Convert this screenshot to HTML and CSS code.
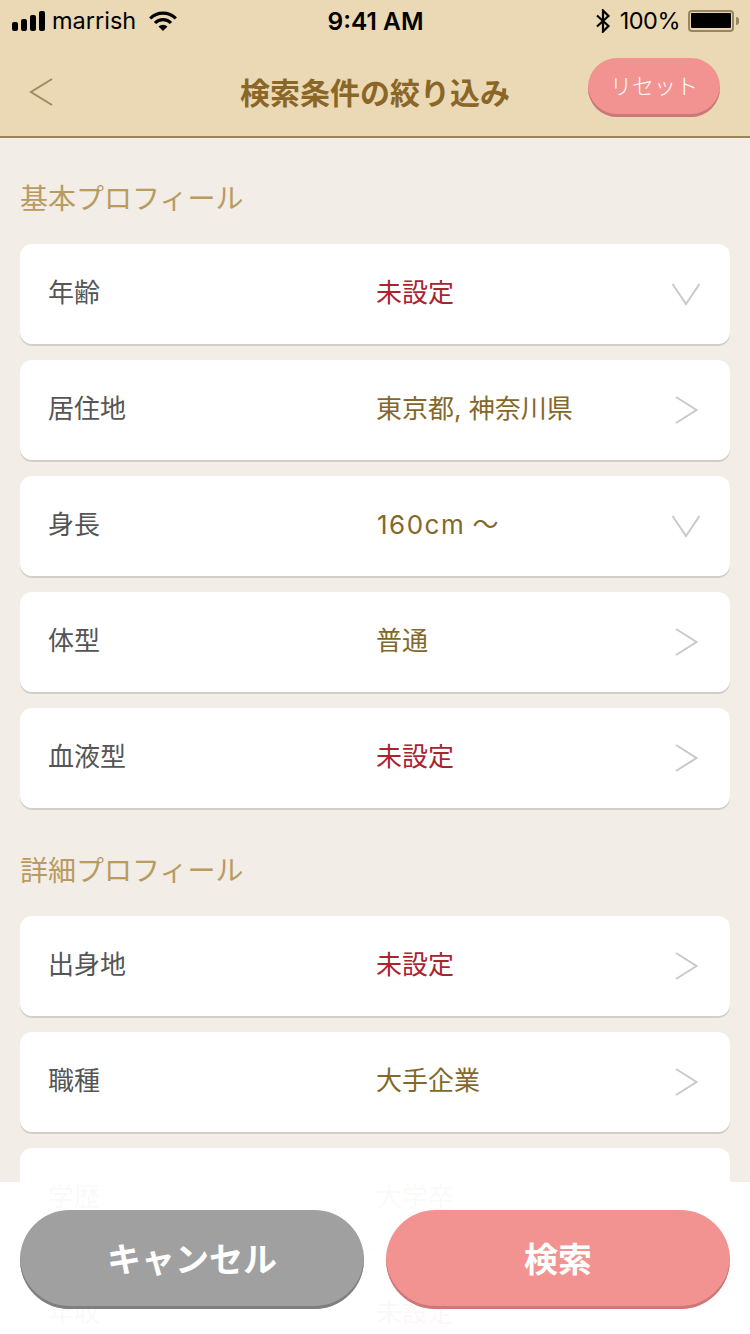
FILE: index.html
```html
<!DOCTYPE html>
<html lang="ja">
<head>
  <meta charset="UTF-8">
  <meta name="viewport" content="width=device-width, initial-scale=1.0">
  <title>検索条件の絞り込み</title>
  <link rel="stylesheet" href="styles.css">
</head>
<body>
  <div class="app">
    <header class="top">
      <div class="status-bar">
        <div class="status-left">
          <div class="signal"><i class="s1"></i><i class="s2"></i><i class="s3"></i><i class="s4"></i></div>
          <span class="carrier">marrish</span>
          <svg class="wifi" width="28" height="20" viewBox="0 0 28 20">
            <path d="M1.200 7.500 A18 18 0 0 1 26.800 7.500" fill="none" stroke="#000" stroke-width="3.200"/>
            <path d="M6 12 A11 11 0 0 1 22 12" fill="none" stroke="#000" stroke-width="3.200"/>
            <path d="M9.500 15.500 A6.500 6.500 0 0 1 18.500 15.500 L14 20 Z" fill="#000"/>
          </svg>
        </div>
        <div class="status-time">9:41 AM</div>
        <div class="status-right">
          <svg class="bt" width="16" height="24" viewBox="0 0 16 24">
            <path d="M2 6.500 L13.500 17 L8 22.500 V1.500 L13.500 7 L2 17.500" fill="none" stroke="#000" stroke-width="2.200"/>
          </svg>
          <span class="pct">100%</span>
          <div class="battery"><div class="battery-fill"></div></div>
          <div class="battery-tip"></div>
        </div>
      </div>
      <div class="navbar">
        <button class="nav-back">
          <svg width="24" height="30" viewBox="0 0 24 30">
            <path d="M23 2 L2 15 L23 28" fill="none" stroke="#a08a5f" stroke-width="2"/>
          </svg>
        </button>
        <h1 class="nav-title">検索条件の絞り込み</h1>
        <button class="reset-btn">リセット</button>
      </div>
    </header>

    <main class="content">
      <h2 class="section-title">基本プロフィール</h2>
      <div class="list">
        <div class="row"><span class="row-label">年齢</span><span class="row-value unset">未設定</span><svg class="chev" width="30" height="24" viewBox="0 0 30 24"><path d="M2.500 2 L16 22 L29.500 2"/></svg></div>
        <div class="row"><span class="row-label">居住地</span><span class="row-value">東京都, 神奈川県</span><svg class="chev" width="30" height="30" viewBox="0 0 30 30"><path d="M6 2 L26.500 15 L6 28"/></svg></div>
        <div class="row"><span class="row-label">身長</span><span class="row-value"><span class="height-num">160cm</span> 〜</span><svg class="chev" width="30" height="24" viewBox="0 0 30 24"><path d="M2.500 2 L16 22 L29.500 2"/></svg></div>
        <div class="row"><span class="row-label">体型</span><span class="row-value">普通</span><svg class="chev" width="30" height="30" viewBox="0 0 30 30"><path d="M6 2 L26.500 15 L6 28"/></svg></div>
        <div class="row"><span class="row-label">血液型</span><span class="row-value unset">未設定</span><svg class="chev" width="30" height="30" viewBox="0 0 30 30"><path d="M6 2 L26.500 15 L6 28"/></svg></div>
      </div>

      <h2 class="section-title">詳細プロフィール</h2>
      <div class="list">
        <div class="row"><span class="row-label">出身地</span><span class="row-value unset">未設定</span><svg class="chev" width="30" height="30" viewBox="0 0 30 30"><path d="M6 2 L26.500 15 L6 28"/></svg></div>
        <div class="row"><span class="row-label">職種</span><span class="row-value">大手企業</span><svg class="chev" width="30" height="30" viewBox="0 0 30 30"><path d="M6 2 L26.500 15 L6 28"/></svg></div>
        <div class="row"><span class="row-label">学歴</span><span class="row-value">大学卒</span><svg class="chev" width="30" height="30" viewBox="0 0 30 30"><path d="M6 2 L26.500 15 L6 28"/></svg></div>
        <div class="row"><span class="row-label">年収</span><span class="row-value unset">未設定</span><svg class="chev" width="30" height="30" viewBox="0 0 30 30"><path d="M6 2 L26.500 15 L6 28"/></svg></div>
      </div>
    </main>

    <footer class="bottom-bar">
      <button class="big-btn cancel">キャンセル</button>
      <button class="big-btn search">検索</button>
    </footer>
  </div>
</body>
</html>
```

FILE: styles.css
```css
* {
  box-sizing: border-box;
}
html, body {
  margin: 0;
  padding: 0;
}
body {
  font-family: 'Noto Sans CJK JP', 'Noto Sans', sans-serif;
  background-color: #f2ede7;
}
.app {
  position: relative;
  width: 750px;
  height: 1334px;
  overflow: hidden;
  display: flex;
  flex-direction: column;
}
.top {
  height: 138px;
  flex-shrink: 0;
  background-color: #ebd9b6;
  border-bottom: 2px solid #9c8457;
}
.status-bar {
  height: 40px;
  display: grid;
  grid-template-columns: 1fr auto 1fr;
  align-items: center;
  padding: 1px 11px 0 12px;
  color: #000000;
}
.status-left {
  display: flex;
  align-items: center;
}
.signal {
  display: flex;
  align-items: flex-end;
  gap: 3px;
  height: 20px;
  margin-right: 7px;
}
.signal i {
  display: block;
  width: 6px;
  border-radius: 2px;
  background-color: #000000;
}
.s1 { height: 9px; }
.s2 { height: 12px; }
.s3 { height: 16px; }
.s4 { height: 20px; }
.carrier {
  font-family: 'Inter', sans-serif;
  font-size: 23.5px;
  line-height: 28px;
}
.wifi {
  margin-left: 13px;
}
.status-time {
  font-family: 'Inter', sans-serif;
  font-size: 24.5px;
  font-weight: 600;
  line-height: 28px;
}
.status-right {
  display: flex;
  align-items: center;
  justify-content: flex-end;
}
.pct {
  font-family: 'Inter', sans-serif;
  font-size: 23.5px;
  letter-spacing: -0.5px;
  line-height: 28px;
  margin-left: 9px;
  margin-right: 8px;
}
.battery {
  width: 46px;
  height: 22px;
  padding: 1.5px 1px;
  border: 2px solid #97865f;
  border-radius: 4px;
}
.battery-fill {
  height: 100%;
  background-color: #000000;
  border-radius: 1px;
}
.battery-tip {
  width: 3px;
  height: 8px;
  margin-left: 2px;
  background-color: #97865f;
  border-radius: 0 3px 3px 0;
}
.navbar {
  height: 96px;
  display: flex;
  align-items: center;
  justify-content: space-between;
  padding: 0 30px 0 29px;
  position: relative;
}
.nav-back {
  padding: 0;
  margin-top: 8px;
  border: none;
  background: none;
  display: flex;
}
.nav-title {
  position: absolute;
  left: 0;
  right: 0;
  margin: 0;
  padding-top: 6px;
  text-align: center;
  font-size: 30px;
  font-weight: 700;
  line-height: 40px;
  color: #8a6727;
  pointer-events: none;
}
.reset-btn {
  width: 132px;
  height: 59px;
  margin-bottom: 1px;
  border: none;
  border-radius: 29px;
  background-color: #f29391;
  box-shadow: inset 0 -3px 0 #cb7878;
  color: #ffffff;
  font-family: inherit;
  font-size: 22px;
  font-weight: 300;
  padding: 0 0 8px;
}
.content {
  padding: 0 20px;
}
.section-title {
  margin: 0;
  height: 106px;
  padding-top: 36px;
  font-size: 28px;
  font-weight: 400;
  line-height: 46px;
  color: #b89b60;
}
.list {
  display: flex;
  flex-direction: column;
  gap: 16px;
}
.list + .section-title {
  height: 108px;
  padding-top: 38px;
}
.row {
  height: 100px;
  display: flex;
  align-items: center;
  padding: 0 30px 6px 28px;
  background-color: #ffffff;
  border-radius: 12px;
  box-shadow: 0 2px 0 #d3cec6;
}
.row-label {
  width: 328px;
  flex-shrink: 0;
  font-size: 26px;
  line-height: 36px;
  color: #555555;
}
.row-value {
  flex: 1;
  margin-top: 4px;
  font-family: 'Inter', 'Noto Sans CJK JP', sans-serif;
  font-size: 26px;
  line-height: 36px;
  color: #84682b;
}
.row-value.unset {
  color: #a9242f;
}
.height-num {
  margin-left: 1px;
  letter-spacing: 1.5px;
}
.chev {
  flex-shrink: 0;
  margin-top: 6px;
}
.chev path {
  fill: none;
  stroke: #c9c9c9;
  stroke-width: 2;
}
.bottom-bar {
  position: absolute;
  left: 0;
  right: 0;
  bottom: 0;
  height: 152px;
  display: flex;
  gap: 22px;
  padding: 28px 20px 0;
  background-color: rgba(255, 255, 255, 0.97);
}
.big-btn {
  flex: 1;
  height: 99px;
  border: none;
  border-radius: 50px;
  color: #ffffff;
  font-family: inherit;
  font-size: 34px;
  font-weight: 700;
  padding: 0 0 4px;
}
.cancel {
  background-color: #a0a0a0;
  box-shadow: inset 0 -3px 0 #7f7f7f;
}
.search {
  background-color: #f29391;
  box-shadow: inset 0 -3px 0 #cb7878;
}
```
